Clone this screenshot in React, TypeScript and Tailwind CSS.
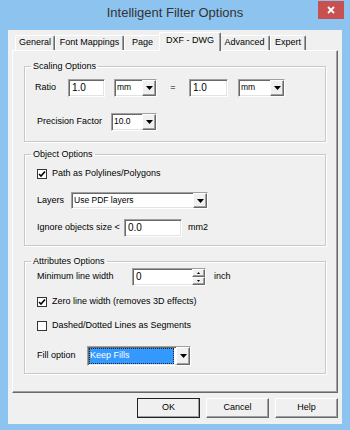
import React from 'react'

const sunken =
  'bg-white border border-t-[#a0a0a0] border-l-[#a0a0a0] border-b-white border-r-white shadow-[inset_1px_1px_0_#696969,inset_-1px_-1px_0_#e3e3e3]'
const raised =
  'bg-[#f0f0f0] border border-t-white border-l-white border-b-[#696969] border-r-[#696969] shadow-[inset_-1px_-1px_0_#a0a0a0]'

function Arrow() {
  return (
    <svg width="7" height="4" viewBox="0 0 7 4">
      <polygon points="0,0 7,0 3.5,4" fill="#000" />
    </svg>
  )
}

function Combo({ value, className, focused }: { value: string; className: string; focused?: boolean }) {
  return (
    <div className={`flex ${sunken} ${className}`}>
      {focused ? (
        <span className="flex-1 m-[1px] mr-[2px] px-[1px] bg-[#3399ff] text-white outline-1 outline-dotted outline-[#222] -outline-offset-1 leading-[15px]">
          {value}
        </span>
      ) : (
        <span className="flex-1 px-[2px] pt-[1px] leading-[13px] text-[8.5px]">{value}</span>
      )}
      <div className={`w-[14px] flex items-center justify-center ${raised}`}>
        <Arrow />
      </div>
    </div>
  )
}

function Edit({ value, className }: { value: string; className: string }) {
  return <div className={`${sunken} ${className} px-[3px] pt-[1px] text-[10px] leading-[13px]`}>{value}</div>
}

function Check({ checked }: { checked?: boolean }) {
  return (
    <span className="w-[10px] h-[10px] border border-[#333] bg-white flex items-center justify-center">
      {checked && (
        <svg width="8" height="8" viewBox="0 0 8 8">
          <path d="M1 4 L3 6 L7 1.5" stroke="#000" strokeWidth="1.6" fill="none" />
        </svg>
      )}
    </span>
  )
}

function Group({ title, children }: { title: string; children: React.ReactNode }) {
  return (
    <fieldset className="mx-[11px] border border-[#c8c8c8] shadow-[1px_1px_0_#fff,inset_1px_1px_0_#fff] p-0 m-0">
      <legend className="ml-[6px] px-[2px] leading-[12px]">{title}</legend>
      {children}
    </fieldset>
  )
}

const tabBase =
  'flex items-center justify-center border-t border-l border-r border-t-white border-l-white border-r-[#696969] shadow-[inset_-1px_0_0_#a0a0a0] rounded-t-[2px]'

export default function App() {
  return (
    <div className="w-[350px] h-[430px] bg-[#8dc3ef] flex flex-col font-['Liberation_Sans',Arial,sans-serif] text-[9px] text-black">
      <div className="h-[30px] flex shrink-0">
        <div className="w-[32px]" />
        <div className="flex-1 text-center text-[13px] leading-[26px] text-[#333]">Intelligent Filter Options</div>
        <div className="w-[32px] flex justify-end pr-[6px]">
          <div className="w-[26px] h-[18px] mt-[1px] bg-[#c75050] flex items-center justify-center">
            <svg width="8" height="8" viewBox="0 0 8 8">
              <path d="M1 1 L7 7 M7 1 L1 7" stroke="#fff" strokeWidth="1.8" />
            </svg>
          </div>
        </div>
      </div>

      <div className="mx-[8px] h-[394px] bg-[#f0f0f0] flex flex-col pt-[2px]">
        <div className="h-[18px] flex items-end ml-[7px]">
          <div className={`${tabBase} w-[40px] h-[15px]`}>General</div>
          <div className={`${tabBase} w-[69px] h-[15px]`}>Font Mappings</div>
          <div className={`${tabBase} w-[37px] h-[15px]`}>Page</div>
          <div className={`${tabBase} w-[62px] h-[19px] -mx-[2px] -mb-[1px] relative z-10 bg-[#f0f0f0] pb-[2px]`}>
            DXF - DWG
          </div>
          <div className={`${tabBase} w-[51px] h-[15px]`}>Advanced</div>
          <div className={`${tabBase} w-[36px] h-[15px]`}>Expert</div>
        </div>

        <div className="ml-[4px] w-[326px] h-[343px] border border-t-white border-l-white border-b-[#696969] border-r-[#696969] shadow-[inset_-1px_-1px_0_#a0a0a0] flex flex-col pt-[9px]">
          <Group title="Scaling Options">
            <div className="pt-[7px] pb-[10px]">
              <div className="flex items-center h-[18px]">
                <span className="ml-[10px] w-[33px]">Ratio</span>
                <Edit value="1.0" className="w-[37px] h-[18px]" />
                <Combo value="mm" className="ml-[9px] w-[43px] h-[18px]" />
                <span className="w-[32px] text-center">=</span>
                <Edit value="1.0" className="w-[39px] h-[18px]" />
                <Combo value="mm" className="ml-[10px] w-[47px] h-[18px]" />
              </div>
              <div className="flex items-center h-[18px] mt-[16px]">
                <span className="ml-[12px] w-[74px]">Precision Factor</span>
                <Combo value="10.0" className="w-[46px] h-[18px]" />
              </div>
            </div>
          </Group>

          <div className="mt-[6px]">
            <Group title="Object Options">
              <div className="pt-[7px] pb-[8px]">
                <div className="flex items-center h-[13px] ml-[12px] gap-[5px]">
                  <Check checked />
                  <span>Path as Polylines/Polygons</span>
                </div>
                <div className="flex items-center h-[17px] mt-[12px]">
                  <span className="ml-[12px] w-[34px]">Layers</span>
                  <Combo value="Use PDF layers" className="w-[137px] h-[17px]" />
                </div>
                <div className="flex items-center h-[18px] mt-[10px]">
                  <span className="ml-[12px] w-[87px]">Ignore objects size &lt;</span>
                  <Edit value="0.0" className="w-[58px] h-[18px]" />
                  <span className="ml-[6px]">mm2</span>
                </div>
              </div>
            </Group>
          </div>

          <div className="mt-[9px]">
            <Group title="Attributes Options">
              <div className="pt-[1px] pb-[7px]">
                <div className="flex items-center h-[18px]">
                  <span className="ml-[12px] w-[95px]">Minimum line width</span>
                  <div className={`flex w-[74px] h-[18px] ${sunken}`}>
                    <span className="flex-1 px-[3px] pt-[1px] text-[10px] leading-[13px]">0</span>
                    <div className="w-[13px] flex flex-col">
                      <div className={`flex-1 flex items-center justify-center ${raised}`}>
                        <svg width="3" height="2" viewBox="0 0 3 2">
                          <polygon points="0,2 3,2 1.5,0" fill="#000" />
                        </svg>
                      </div>
                      <div className={`flex-1 flex items-center justify-center ${raised}`}>
                        <svg width="3" height="2" viewBox="0 0 3 2">
                          <polygon points="0,0 3,0 1.5,2" fill="#000" />
                        </svg>
                      </div>
                    </div>
                  </div>
                  <span className="ml-[8px]">inch</span>
                </div>
                <div className="flex items-center h-[13px] mt-[9px] ml-[12px] gap-[5px]">
                  <Check checked />
                  <span>Zero line width (removes 3D effects)</span>
                </div>
                <div className="flex items-center h-[13px] mt-[11px] ml-[12px] gap-[5px]">
                  <Check />
                  <span>Dashed/Dotted Lines as Segments</span>
                </div>
                <div className="flex items-center h-[20px] mt-[14px]">
                  <span className="ml-[12px] w-[50px]">Fill option</span>
                  <Combo value="Keep Fills" focused className="w-[104px] h-[20px]" />
                </div>
              </div>
            </Group>
          </div>
        </div>

        <div className="ml-[4px] w-[326px] mt-[5px] flex justify-end gap-[6px]">
          <button className={`w-[63px] h-[20px] ${raised} outline outline-1 outline-[#222] -outline-offset-1 text-[9px]`}>OK</button>
          <button className={`w-[63px] h-[20px] ${raised} text-[9px]`}>Cancel</button>
          <button className={`w-[63px] h-[20px] ${raised} text-[9px]`}>Help</button>
        </div>
      </div>
    </div>
  )
}
